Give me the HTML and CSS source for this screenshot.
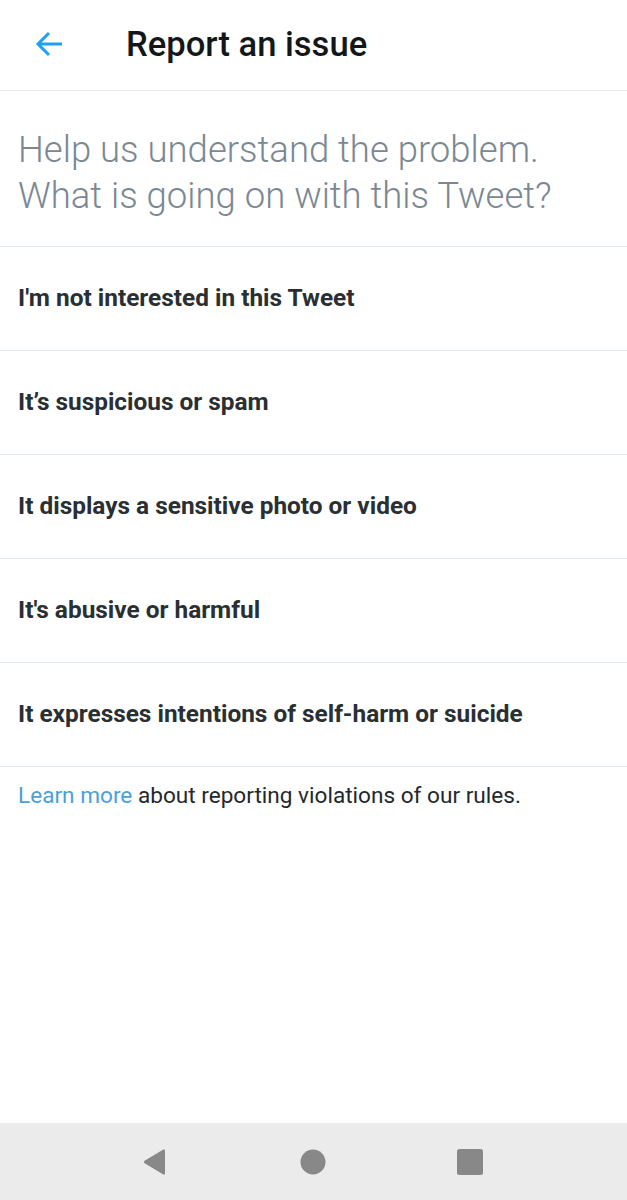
FILE: index.html
```html
<!DOCTYPE html>
<html>
  <head>
    <meta charset="UTF-8">
    <title>Report an issue</title>
    <link rel="stylesheet" href="styles.css">
  </head>
  <body>
    <div class="screen">
      <div class="top-bar">
        <a href="#" class="back-btn">
          <svg width="28" height="26" viewBox="0 0 28 26">
            <path d="M27 13H3M14 2L3 13l11 11" fill="none" stroke="#1da1f2" stroke-width="3" stroke-linecap="butt" stroke-linejoin="miter"/>
          </svg>
        </a>
        <h1 class="title">Report an issue</h1>
      </div>

      <div class="prompt">Help us understand the problem.<br>What is going on with this Tweet?</div>

      <ul class="options">
        <li><a href="#">I'm not interested in this Tweet</a></li>
        <li><a href="#">It’s suspicious or spam</a></li>
        <li><a href="#">It displays a sensitive photo or video</a></li>
        <li><a href="#">It's abusive or harmful</a></li>
        <li><a href="#">It expresses intentions of self-harm or suicide</a></li>
      </ul>

      <p class="learn"><a href="#">Learn more</a> about reporting violations of our rules.</p>

      <div class="spacer"></div>

      <div class="nav-bar">
        <svg width="26" height="28" viewBox="0 0 26 28">
          <path d="M23 2.5v23c0 1-0.8 1.4-1.6 0.9L2.6 15.2c-0.9-0.6-0.9-1.8 0-2.4L21.4 1.6C22.2 1.1 23 1.5 23 2.5z" fill="#888"/>
        </svg>
        <svg width="26" height="26" viewBox="0 0 26 26">
          <circle cx="13" cy="13" r="12.5" fill="#888"/>
        </svg>
        <svg width="26" height="26" viewBox="0 0 26 26">
          <rect x="0" y="0" width="26" height="26" rx="2.5" fill="#888"/>
        </svg>
      </div>
    </div>
  </body>
</html>
```

FILE: styles.css
```css
html, body {
  margin: 0;
  padding: 0;
  background-color: #fff;
}

body {
  font-family: Roboto, "Noto Sans", sans-serif;
}

.screen {
  width: 627px;
  height: 1200px;
  display: flex;
  flex-direction: column;
}

.top-bar {
  height: 91px;
  display: flex;
  align-items: center;
  border-bottom: 1px solid #e6e9ec;
  box-sizing: border-box;
}

.back-btn {
  display: flex;
  margin-left: 35px;
  margin-right: 63px;
  margin-top: -3px;
}

.title {
  margin: 0;
  font-size: 34.6px;
  font-weight: 500;
  color: #14171a;
  margin-top: -2px;
}

.prompt {
  padding: 36px 18px 27px;
  font-size: 36.5px;
  font-weight: 300;
  line-height: 46px;
  color: #7b8893;
  border-bottom: 1px solid #e1e8ed;
}

.options {
  list-style: none;
  margin: 0;
  padding: 0;
}

.options li {
  height: 104px;
  display: flex;
  align-items: center;
  border-bottom: 1px solid #e1e8ed;
  box-sizing: border-box;
}

.options li a {
  padding-left: 18px;
  padding-bottom: 3px;
  font-size: 24.4px;
  font-weight: 700;
  color: #292f33;
  text-decoration: none;
}

.learn {
  margin: 0;
  padding: 15px 18px 13px;
  font-size: 22.6px;
  color: #23282c;
}

.learn a {
  color: #4c9fdb;
  text-decoration: none;
}

.spacer {
  flex: 1;
}

.nav-bar {
  height: 77px;
  background-color: #ebebeb;
  display: flex;
  align-items: center;
  justify-content: space-between;
  padding: 0 144px 0 142px;
}
```
